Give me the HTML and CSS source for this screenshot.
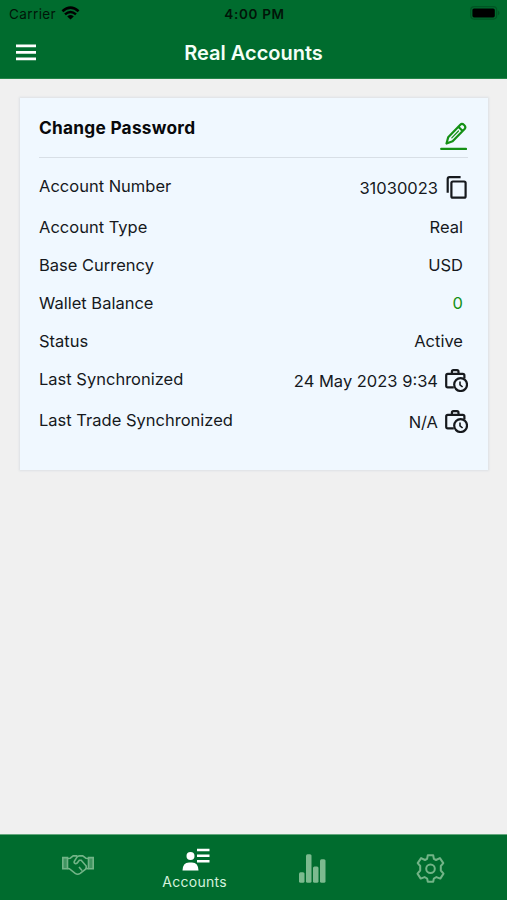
FILE: index.html
```html
<!DOCTYPE html>
<html lang="en">
<head>
    <meta charset="UTF-8">
    <meta name="viewport" content="width=device-width, initial-scale=1.0">
    <title>Real Accounts</title>
    <link rel="stylesheet" href="styles.css">
</head>
<body>
    <!-- Shared icons -->
    <svg class="defs">
        <symbol id="sync" viewBox="0 0 23 23">
            <path d="M8.8 18.4H2.8Q1.2 18.4 1.2 16.8V6.4Q1.2 4.8 2.8 4.8H17.8Q19.4 4.8 19.4 6.4V9.4M6.9 4.8V2.7Q6.9 1.2 8.4 1.2H12Q13.5 1.2 13.5 2.7V4.8"/>
            <circle cx="15.6" cy="15.6" r="6.4"/>
            <path class="thin" d="M15 12.4V15.8L17.6 18"/>
        </symbol>
    </svg>

    <!-- Status bar -->
    <div class="status-bar">
        <div class="carrier">
            <span>Carrier</span>
            <svg width="19" height="14" viewBox="0 0 19 14">
                <path d="M1.4 5.3Q9.5 -2 17.6 5.3M4 8.4Q9.5 3.6 15 8.4" fill="none" stroke="#000" stroke-width="2.5"/>
                <path d="M9.5 13.6L6.2 10.4Q9.5 7.7 12.8 10.4Z"/>
            </svg>
        </div>
        <div class="time">4:00 PM</div>
        <div class="battery">
            <svg width="30" height="14" viewBox="0 0 30 14">
                <rect x=".7" y=".7" width="26" height="12.4" rx="3.5" fill="none" stroke="#005524" stroke-width="1.2"/>
                <rect x="2.4" y="2.4" width="22.4" height="9" rx="1.6"/>
                <path d="M28 4.6Q31 7 28 9.2Z" fill="#005524"/>
            </svg>
        </div>
    </div>

    <!-- Title bar -->
    <header class="header">
        <svg class="menu" width="20" height="17" viewBox="0 0 20 17">
            <path d="M0 1.9H20M0 8.4H20M0 14.9H20" stroke="#fff" stroke-width="2.7"/>
        </svg>
        <h1>Real Accounts</h1>
    </header>

    <!-- Account card -->
    <main class="content">
        <section class="card">
            <div class="card-head">
                <h2>Change Password</h2>
                <svg class="edit" width="27" height="29" viewBox="0 0 27 29">
                    <path d="M1.2 26.9H26" stroke-width="2.2"/>
                    <path d="M6.5 21.5L8.2 15.2L20.3 2.7Q22 1.1 24.1 3Q26.3 5.1 24.6 7L12.6 19.3ZM18.4 4.8L22.6 9" stroke-width="2.2"/>
                    <path d="M11.8 15.9L18.5 9" stroke-width="1.2"/>
                </svg>
            </div>
            <div class="row">
                <span>Account Number</span>
                <div class="value">
                    <span>31030023</span>
                    <svg class="icon copy" width="23" height="23" viewBox="0 0 23 23">
                        <path d="M2.7 16.8V3Q2.7 1.2 4.5 1.2H15.6"/>
                        <rect x="6.4" y="5.5" width="14.2" height="16.2" rx="1.5"/>
                    </svg>
                </div>
            </div>
            <div class="row"><span>Account Type</span><div class="value plain">Real</div></div>
            <div class="row"><span>Base Currency</span><div class="value plain">USD</div></div>
            <div class="row"><span>Wallet Balance</span><div class="value plain green">0</div></div>
            <div class="row"><span>Status</span><div class="value plain">Active</div></div>
            <div class="row">
                <span>Last Synchronized</span>
                <div class="value"><span>24 May 2023 9:34</span><svg class="icon" width="23" height="23"><use href="#sync"/></svg></div>
            </div>
            <div class="row">
                <span>Last Trade Synchronized</span>
                <div class="value"><span>N/A</span><svg class="icon" width="23" height="23"><use href="#sync"/></svg></div>
            </div>
        </section>
    </main>

    <!-- Tabs -->
    <nav class="tabs">
        <a class="tab deals">
            <svg width="32" height="22" viewBox="0 0 32 22">
                <path d="M.8 3.6H5.5V14.7H.8ZM31.2 3.6H26.5V14.7H31.2Z" fill="#8fc7a0" fill-opacity=".45"/>
                <path d="M5.5 4.5L8.2 4.2L11.2 1.9H15.2M5.5 14.5L7.3 14.7L13.2 19.4Q15.5 21 18.2 19.4L24 14.8L26.5 14.5M26.5 4.5L23.9 4.2L20.7 1.9H17.5Q15.8 1.9 14.6 3.6L12.3 7.3Q11.6 9.3 13.6 9.6Q15 9.7 16 8L17.3 6.2H19.2L24.2 12.1Q24.5 13.8 23.5 15M17 13L20 16.5"/>
            </svg>
        </a>
        <a class="tab active">
            <svg width="28" height="23" viewBox="0 0 28 23">
                <circle cx="8.5" cy="8" r="4"/>
                <path d="M.5 22.5Q.7 14.4 7 14.4H10Q16.3 14.4 16.5 22.5ZM15 .8H27.5V3.3H15ZM15 6.5H27.5V9H15ZM15 12H27.5V14.5H15Z"/>
            </svg>
            <span>Accounts</span>
        </a>
        <a class="tab stats">
            <svg width="27" height="29" viewBox="0 0 27 29">
                <rect x="0" y="18.3" width="5.5" height="10.5" rx="1.5"/>
                <rect x="7" y=".3" width="5.5" height="28.5" rx="1.5"/>
                <rect x="14" y="12.4" width="5.5" height="16.4" rx="1.5"/>
                <rect x="21" y="5.3" width="5.5" height="23.5" rx="1.5"/>
            </svg>
        </a>
        <a class="tab settings">
            <svg width="29" height="29" viewBox="0 0 29 29">
                <path d="M11.8 1.2H17.2L17.9 4.9L20 6L23.9 4.1L27.3 9.1L24.8 12V16.5L27.5 19.6L24.3 24.6L20.4 23.1L17.9 24.5L17.2 27.8H11.8L11.1 24.5L8.6 23.1L4.7 24.6L1.5 19.6L4.2 16.5V12L1.7 9.1L5.1 4.1L9 6L11.1 4.9Z"/>
                <circle cx="14.5" cy="14.7" r="4.3"/>
            </svg>
        </a>
    </nav>
</body>
</html>
```

FILE: styles.css
```css
* { box-sizing: border-box; }
body {
    margin: 0;
    height: 900px;
    display: flex;
    flex-direction: column;
    background: #f0f0f0;
    color: #16191d;
    font-family: Inter, "Liberation Sans", sans-serif;
    font-size: 16.5px;
    line-height: 20px;
}
h1, h2 { margin: 0; }
svg { display: block; flex: none; }
.defs { display: none; }

/* Status bar */
.status-bar {
    height: 27px;
    padding: 0 7px 0 9px;
    display: grid;
    grid-template-columns: 1fr auto 1fr;
    align-items: center;
    background: #006c2e;
    color: #001508;
    font-size: 13.5px;
}
.carrier { display: flex; align-items: center; gap: 5px; letter-spacing: .4px; }
.carrier svg { margin-bottom: 2px; }
.time { font-weight: 600; letter-spacing: .7px; }
.battery { justify-self: end; margin-bottom: 1px; }

/* Title bar */
.header {
    height: 52px;
    padding: 0 16px;
    display: grid;
    grid-template-columns: 1fr auto 1fr;
    align-items: center;
    background: #006c2e;
    border-bottom: 1px solid #258449;
}
.header h1 { color: #f4fff7; font-size: 20px; font-weight: 600; }

/* Account card */
.content { flex: 1; padding: 19px 19px 0 20px; }
.card {
    height: 372px;
    padding: 0 20px 0 19px;
    background: #f0f8ff;
    box-shadow: 0 0 2px 1px #dde1e5;
}
.card-head {
    height: 60px;
    padding-top: 20px;
    display: flex;
    justify-content: space-between;
    border-bottom: 1px solid #d8dfe6;
    margin-bottom: 9px;
}
.card-head h2 { font-size: 17.3px; font-weight: 700; letter-spacing: .25px; color: #08090b; }
.edit { margin: 4px 1px 0 0; fill: none; stroke: #159015; stroke-linejoin: round; stroke-linecap: round; }
.row {
    padding: 9px 0;
    display: flex;
    justify-content: space-between;
}
.value { display: flex; align-items: center; gap: 7px; }
.plain { padding-right: 5px; }
.green { color: #159015; }
.icon { fill: none; stroke: #16191d; stroke-width: 2.2; stroke-linejoin: round; }
.thin { stroke-width: 1.6; }

/* Tabs */
.tabs {
    height: 66px;
    padding: 0 18px;
    display: grid;
    grid-template-columns: repeat(4, 1fr);
    background: #006c2e;
    border-top: 1px solid #64a77d;
}
.tab { display: flex; flex-direction: column; align-items: center; }
.deals svg { margin: 19px 0 0 2px; fill: none; stroke: #72b487; stroke-width: 1.6; }
.active { padding-top: 13px; color: #d5f2dd; font-size: 14px; letter-spacing: .3px; }
.active svg { margin: 0 0 1px 2px; fill: #fff; }
.stats svg { margin-top: 19px; fill: #7cba8f; }
.settings svg { margin-top: 19px; fill: none; stroke: #72b487; stroke-width: 2; stroke-linejoin: round; }
```
